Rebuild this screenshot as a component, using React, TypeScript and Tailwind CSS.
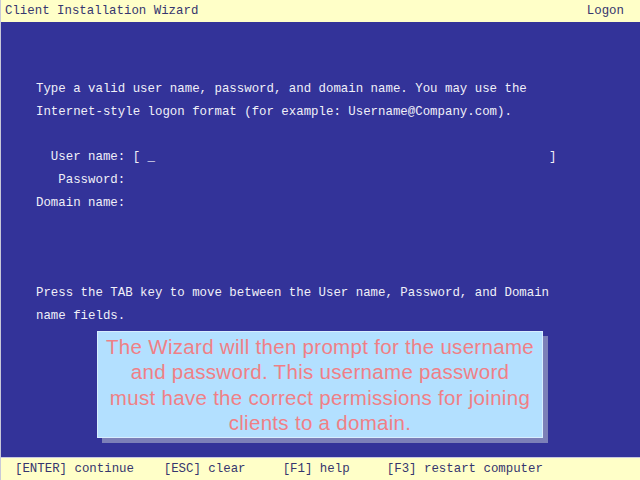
export default function App() {
  const mono = { fontFamily: '"Liberation Mono", "Courier New", monospace' }
  const userLine = "  User name: [ _" + " ".repeat(53) + "]"

  return (
    <div className="w-[640px] h-[480px] flex flex-col bg-[#333399] border-l border-[#c8c8d8] overflow-hidden" style={mono}>
      {/* Header */}
      <div className="h-[22px] shrink-0 bg-[#ffffc8] flex items-center justify-between pl-[4px] pr-[16px] text-[12.4px] text-[#36366e]">
        <span className="whitespace-pre">Client Installation Wizard</span>
        <span>Logon</span>
      </div>

      {/* Body */}
      <div className="flex-1 flex flex-col pt-[56px] pl-[35px] text-[12.4px] leading-[23px] text-[#f0f0f8] whitespace-pre">
        <div>Type a valid user name, password, and domain name. You may use the</div>
        <div>Internet-style logon format (for example: Username@Company.com).</div>
        <div className="h-[22px]" />
        <div>{userLine}</div>
        <div>{"   Password:"}</div>
        <div>Domain name:</div>
        <div className="h-[67px]" />
        <div>Press the TAB key to move between the User name, Password, and Domain</div>
        <div>name fields.</div>
      </div>

      {/* Callout */}
      <div className="relative h-0">
        <div className="absolute left-[96px] top-[-126px] w-[446px] h-[107px]">
          <div className="absolute left-[5px] top-[5px] w-full h-full bg-[#7c80b8]" />
          <div
            className="relative w-full h-full bg-[#b3e0ff] border border-[#d8eeff] flex flex-col items-center justify-center text-center text-[20.5px] leading-[25.5px] text-[#f07f86] tracking-[0.3px]"
            style={{ fontFamily: '"Liberation Sans", Arial, sans-serif' }}
          >
            <div>The Wizard will then prompt for the username</div>
            <div>and password. This username password</div>
            <div>must have the correct permissions for joining</div>
            <div>clients to a domain.</div>
          </div>
        </div>
      </div>

      {/* Footer */}
      <div className="h-[1px] bg-[#c8c8e0]" />
      <div className="h-[22px] shrink-0 bg-[#ffffc8] flex items-center pl-[14px] text-[12.4px] text-[#36366e] whitespace-pre">
        {"[ENTER] continue    [ESC] clear     [F1] help     [F3] restart computer"}
      </div>
    </div>
  )
}
